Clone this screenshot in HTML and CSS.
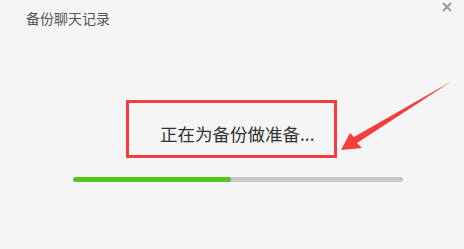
FILE: index.html
```html
<!DOCTYPE html>
<html lang="zh">
<head>
<meta charset="utf-8">
<title>备份聊天记录</title>
<link rel="stylesheet" href="styles.css">
</head>
<body>
<div class="dialog">
  <header class="titlebar">
    <span class="title">备份聊天记录</span>
    <span class="close" aria-label="关闭">
      <svg width="10" height="10" viewBox="0 0 10 10"><path d="M1 1L9 9M9 1L1 9" stroke="#9a9a9a" stroke-width="2" fill="none"/></svg>
    </span>
  </header>
  <main class="content">
    <p class="status">正在为备份做准备...</p>
    <div class="progress"><div class="fill" style="width:48%"></div></div>
  </main>
  <div class="annot-box"></div>
  <svg class="annot-arrow" viewBox="0 0 464 249" width="464" height="249">
    <polygon fill="#f53d3d" points="341,150 350,133 354,137 452,81 357,143 362,148"/>
  </svg>
</div>
</body>
</html>
```
FILE: styles.css
```css
html, body {
  margin: 0;
  padding: 0;
}
body {
  background: #f5f5f5;
  font-family: "Noto Sans CJK SC", "Microsoft YaHei", sans-serif;
  width: 464px;
  height: 249px;
  overflow: hidden;
}
.dialog {
  position: relative;
  width: 464px;
  height: 249px;
}
.titlebar {
  display: flex;
  justify-content: space-between;
  align-items: flex-start;
  height: 36px;
}
.title {
  margin: 8px 0 0 26px;
  font-size: 14px;
  line-height: 20px;
  color: #555;
}
.close {
  display: block;
  width: 10px;
  height: 10px;
  margin: 2px 12px 0 0;
}
.close svg { display: block; }
.content {
  display: flex;
  flex-direction: column;
}
.status {
  margin: 85px 0 0 160px;
  font-size: 17.5px;
  line-height: 26px;
  color: #333;
}
.progress {
  margin: 30px 0 0 73px;
  width: 330px;
  height: 5px;
  border-radius: 3px;
  background: #c8c8c8;
  overflow: hidden;
}
.fill {
  height: 100%;
  background: #52c41a;
  border-radius: 3px;
}
.annot-box {
  position: absolute;
  left: 126px;
  top: 100px;
  width: 205px;
  height: 52px;
  border: 3px solid #f53d3d;
}
.annot-arrow {
  position: absolute;
  left: 0;
  top: 0;
}
```
